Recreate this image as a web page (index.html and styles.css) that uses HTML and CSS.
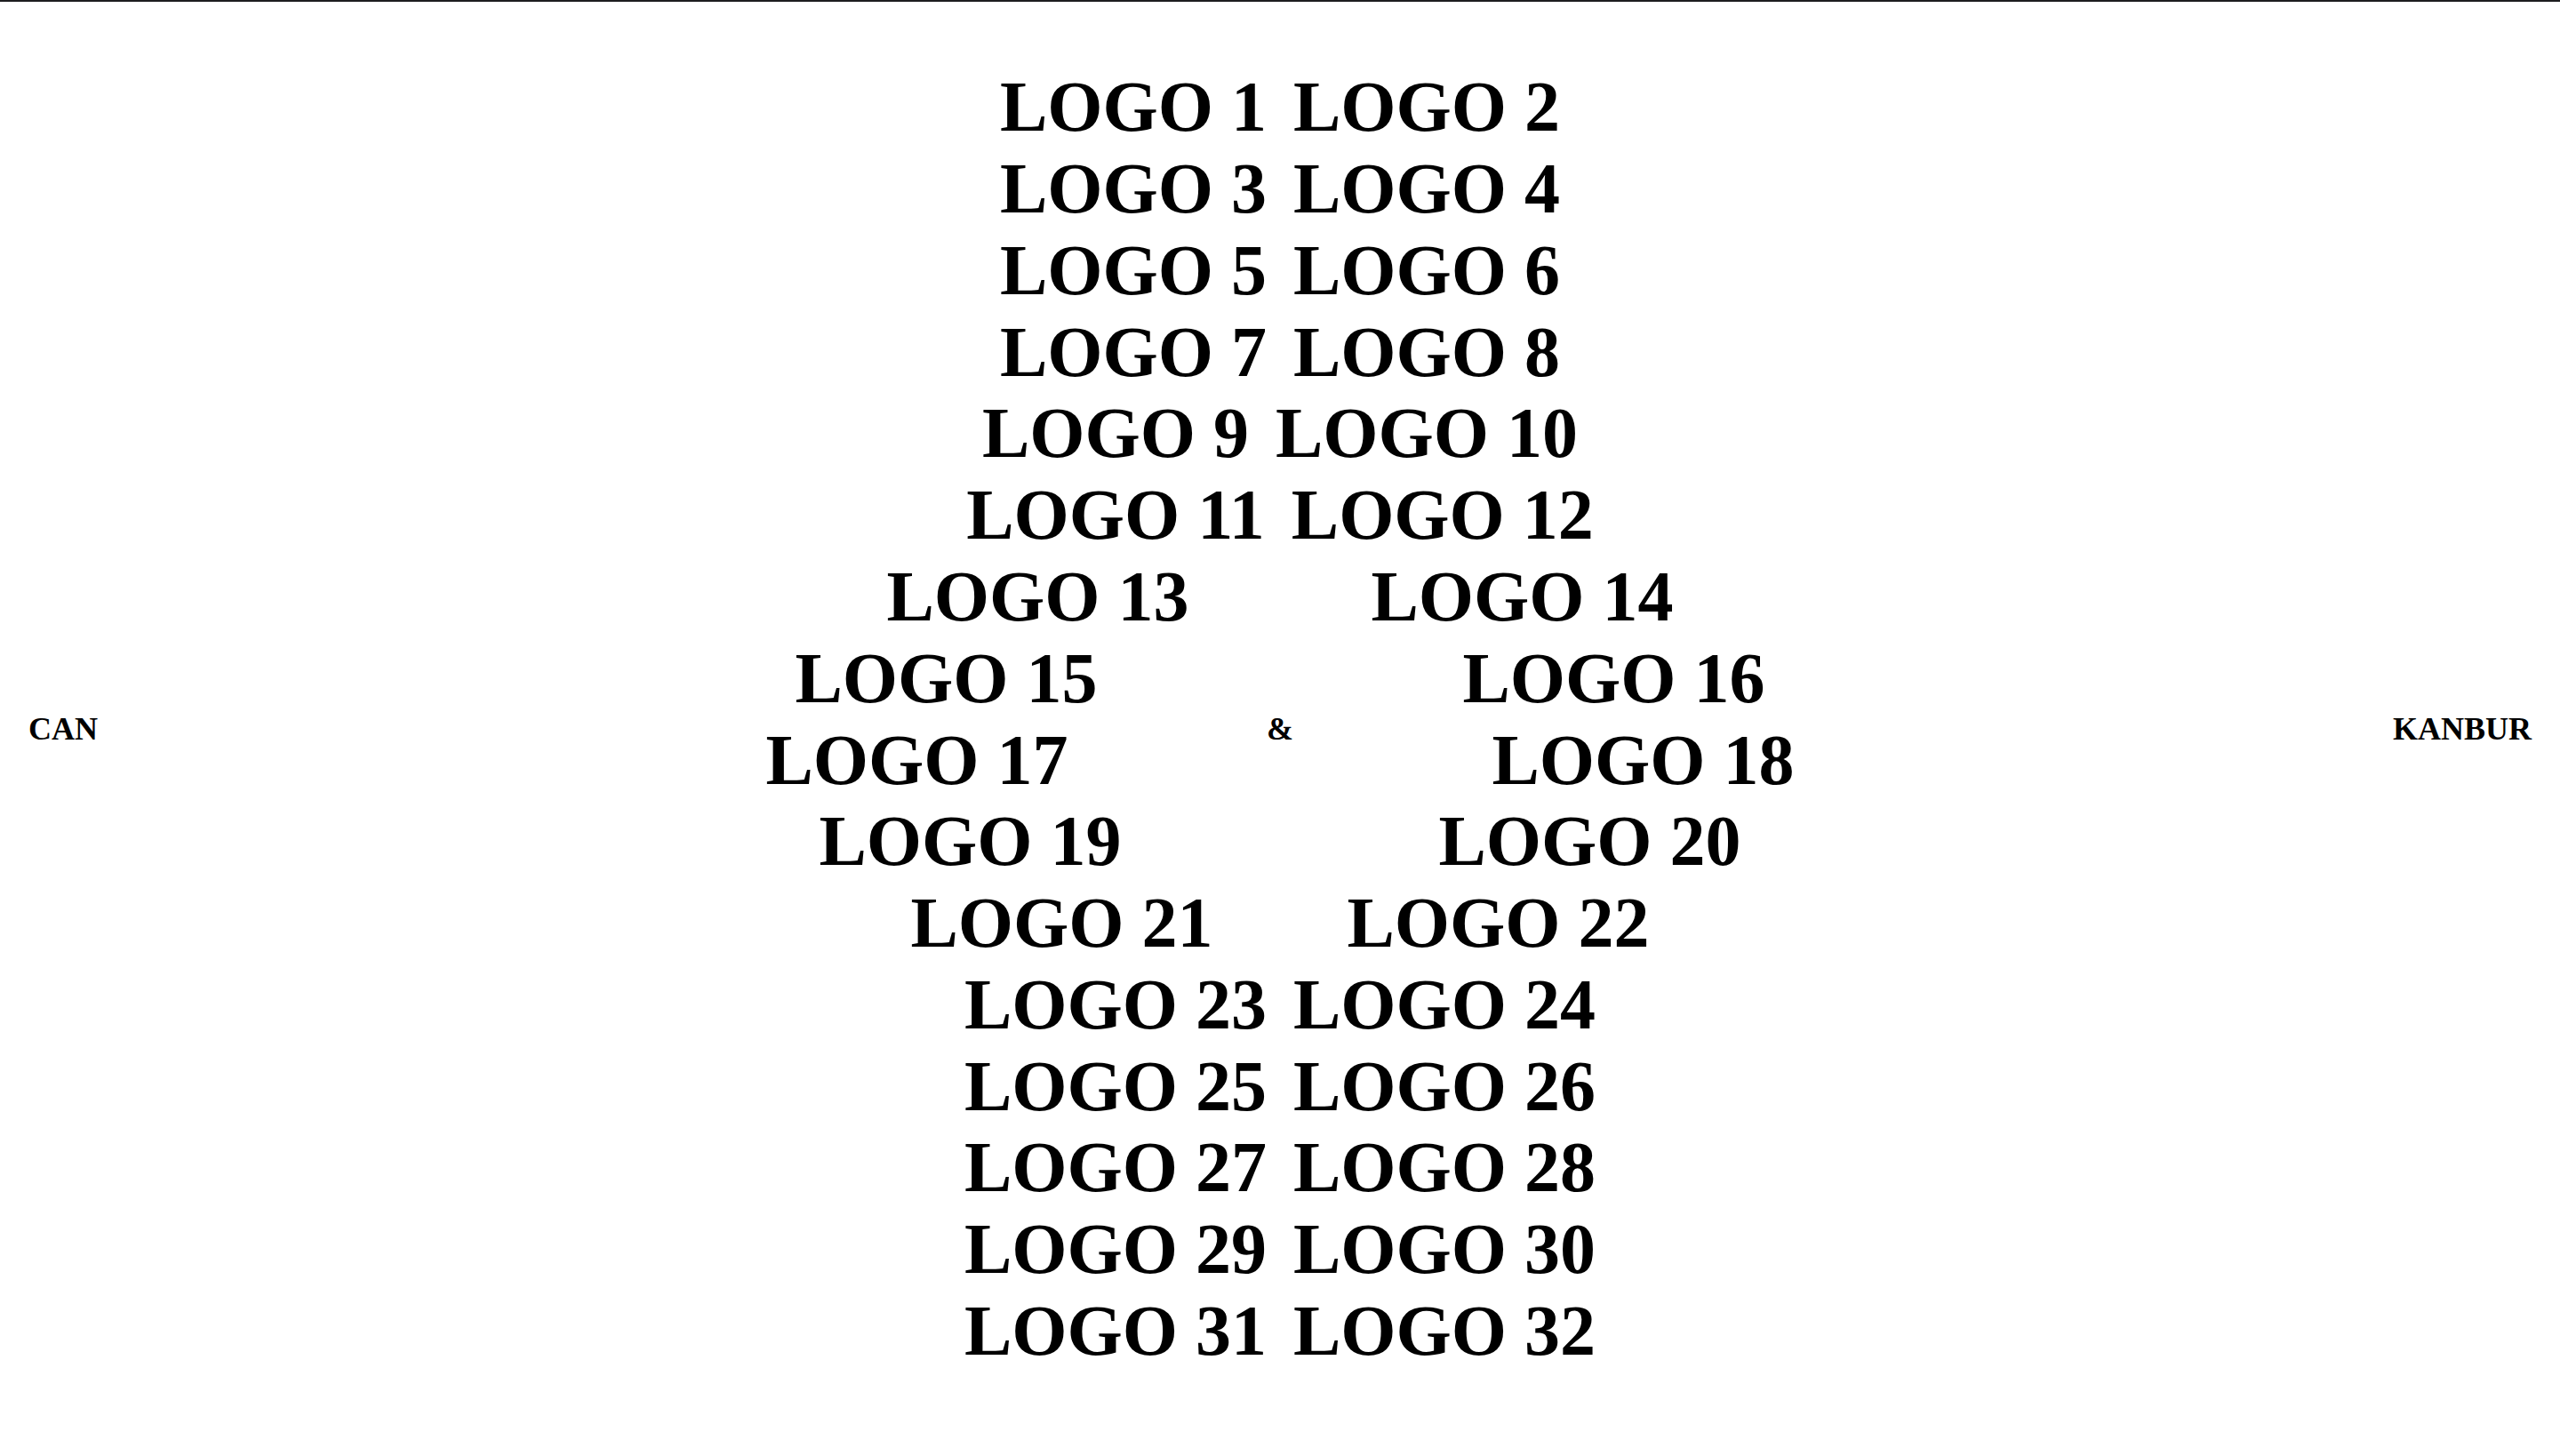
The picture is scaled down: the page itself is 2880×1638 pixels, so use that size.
FILE: index.html
```html
<!DOCTYPE html>
<html lang="en">
<head>
<meta charset="utf-8">
<title>Can &amp; Kanbur</title>
<link rel="stylesheet" href="styles.css">
</head>
<body>
<main class="page">
  <div class="side side-left">CAN</div>
  <div class="center">
    <ul class="logos">
      <li class="row"><span>LOGO 1</span><span>LOGO 2</span></li>
      <li class="row"><span>LOGO 3</span><span>LOGO 4</span></li>
      <li class="row"><span>LOGO 5</span><span>LOGO 6</span></li>
      <li class="row"><span>LOGO 7</span><span>LOGO 8</span></li>
      <li class="row"><span>LOGO 9</span><span>LOGO 10</span></li>
      <li class="row"><span>LOGO 11</span><span>LOGO 12</span></li>
      <li class="row row-a"><span>LOGO 13</span><span>LOGO 14</span></li>
      <li class="row row-b"><span>LOGO 15</span><span>LOGO 16</span></li>
      <li class="row row-c"><span>LOGO 17</span><span>LOGO 18</span></li>
      <li class="row row-d"><span>LOGO 19</span><span>LOGO 20</span></li>
      <li class="row row-e"><span>LOGO 21</span><span>LOGO 22</span></li>
      <li class="row"><span>LOGO 23</span><span>LOGO 24</span></li>
      <li class="row"><span>LOGO 25</span><span>LOGO 26</span></li>
      <li class="row"><span>LOGO 27</span><span>LOGO 28</span></li>
      <li class="row"><span>LOGO 29</span><span>LOGO 30</span></li>
      <li class="row"><span>LOGO 31</span><span>LOGO 32</span></li>
    </ul>
    <div class="amp">&amp;</div>
  </div>
  <div class="side side-right">KANBUR</div>
</main>
</body>
</html>
```

FILE: styles.css
```css
html, body {
  margin: 0;
  padding: 0;
  background: #ffffff;
}

body {
  border-top: 2px solid #1d1d1f;
  font-family: "Liberation Serif", "Times New Roman", serif;
  font-weight: bold;
  color: #000000;
}

.page {
  box-sizing: border-box;
  height: calc(100vh - 2px);
  padding: 0 32px;
  display: grid;
  grid-template-columns: 1fr auto 1fr;
  align-items: center;
}

.side {
  font-size: 36px;
}

.side-left {
  justify-self: start;
}

.side-right {
  justify-self: end;
}

.center {
  display: grid;
  align-items: center;
  justify-items: center;
}

.logos,
.amp {
  grid-area: 1 / 1;
}

.logos {
  list-style: none;
  margin: 0;
  padding: 0 0 21px 0;
  font-size: 80px;
  line-height: 91.8px;
  white-space: nowrap;
}

.row {
  display: flex;
  justify-content: center;
  gap: 30px;
}

.row-a { gap: 205px; }
.row-b { gap: 411px; }
.row-c { gap: 477px; }
.row-d { gap: 357px; }
.row-e { gap: 151px; }

.amp {
  font-size: 36px;
}
```
